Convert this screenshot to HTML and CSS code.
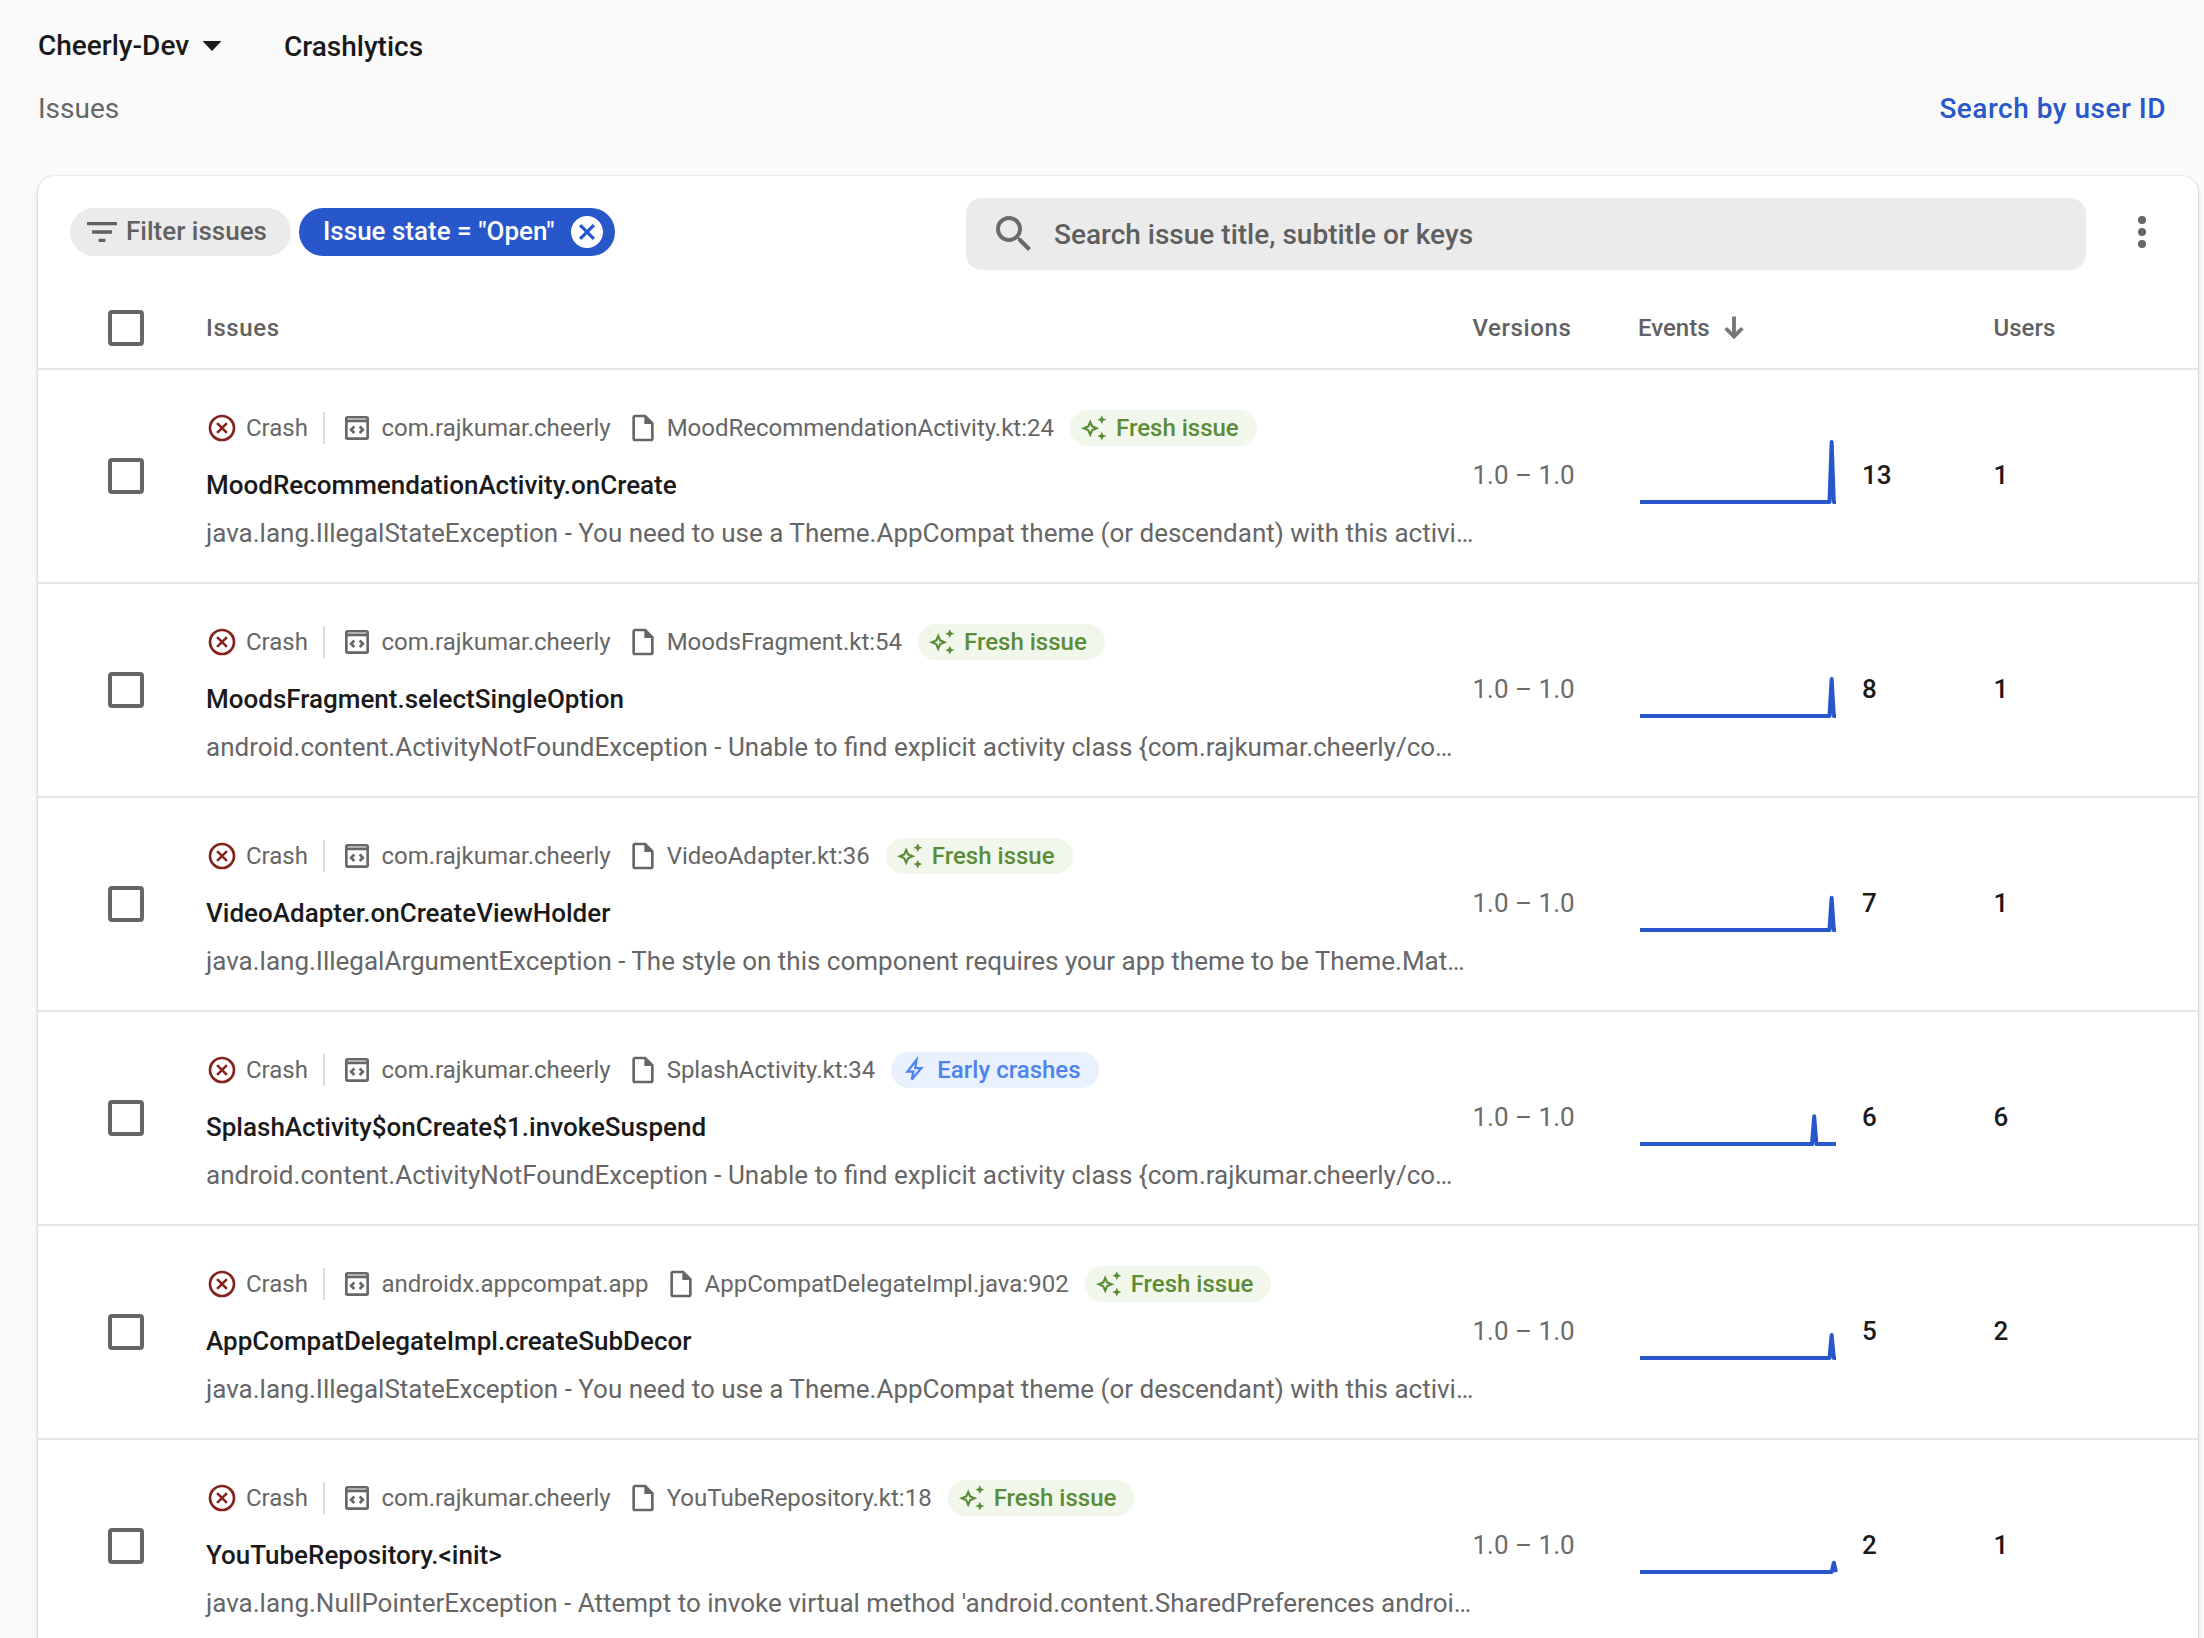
FILE: index.html
```html
<!DOCTYPE html>
<html lang="en">
<head>
<meta charset="utf-8">
<title>Crashlytics – Issues</title>
<link rel="stylesheet" href="styles.css">
</head>
<body>
<svg class="defs" aria-hidden="true">
  <symbol id="i-crash" viewBox="0 0 24 24"><path d="M12 2a10 10 0 1 0 0 20 10 10 0 0 0 0-20zm0 18a8 8 0 1 1 0-16 8 8 0 0 1 0 16z"/><path class="cross" d="M8.300 8.300 15.700 15.700M15.700 8.300 8.300 15.700"/></symbol>
  <symbol id="i-package" viewBox="0 0 24 24"><path fill-rule="evenodd" d="M5 3h14a2 2 0 0 1 2 2v14a2 2 0 0 1-2 2H5a2 2 0 0 1-2-2V5a2 2 0 0 1 2-2zm0 1.900v.8h14v-.8zM5 7.700V19h14V7.700z"/><path class="line" d="M10 10.900 7.600 13.300 10 15.700M14 10.900l2.400 2.400-2.400 2.400"/></symbol>
  <symbol id="i-file" viewBox="0 0 24 24"><path d="M14 2H6c-1.100 0-1.990.900-1.990 2L4 20c0 1.100.890 2 1.990 2H18c1.100 0 2-.900 2-2V8zM6 20V4h7v5h5v11z"/></symbol>
  <symbol id="i-fresh" viewBox="0 0 28 28"><path fill-rule="evenodd" d="M10.200 5.200 12.900 11.600 19.300 14.300 12.900 17 10.200 23.400 7.500 17 1.100 14.300 7.500 11.600zM10.200 10.700 9.100 13.200 6.600 14.300 9.100 15.400 10.200 17.900 11.300 15.400 13.800 14.300 11.300 13.200zM21.800 1.300l1.350 3.050 3.050 1.350-3.050 1.350-1.350 3.050-1.350-3.050-3.050-1.350 3.050-1.350zM21.800 17.700l1.350 3.050 3.050 1.350-3.050 1.350-1.350 3.050-1.350-3.050-3.050-1.350 3.050-1.350z"/></symbol>
  <symbol id="i-early" viewBox="0 0 28 28"><path class="bolt" d="M15.500 4 6.500 15.600h5.900l-1.600 8L20.300 12.200h-6z"/></symbol>
</svg>

<header class="topbar">
  <button class="project">Cheerly-Dev<svg class="caret" viewBox="0 0 20 10"><path d="M0.500 0h19L10 10z"/></svg></button>
  <span class="product">Crashlytics</span>
</header>
<div class="subbar">
  <span class="crumb">Issues</span>
  <a class="user-search">Search by user ID</a>
</div>

<main class="card">
  <div class="toolbar">
    <button class="chip chip-filter"><svg viewBox="0 0 24 24"><path d="M10 18h4v-2h-4zM3 6v2h18V6zm3 7h12v-2H6z"/></svg><span>Filter issues</span></button>
    <button class="chip chip-state"><span>Issue state = "Open"</span><svg viewBox="2 2 20 20"><path d="M12 2C6.470 2 2 6.470 2 12s4.470 10 10 10 10-4.470 10-10S17.530 2 12 2zm5 13.590L15.590 17 12 13.410 8.410 17 7 15.590 10.590 12 7 8.410 8.410 7 12 10.590 15.590 7 17 8.410 13.410 12z"/></svg></button>
    <div class="search"><svg viewBox="0 0 24 24"><path d="M15.500 14h-.790l-.280-.270A6.471 6.471 0 0 0 16 9.500 6.500 6.500 0 1 0 9.500 16c1.610 0 3.090-.590 4.230-1.570l.270.280v.790l5 4.990L20.490 19zm-6 0C7.010 14 5 11.990 5 9.500S7.010 5 9.500 5 14 7.010 14 9.500 11.990 14 9.500 14z"/></svg><span>Search issue title, subtitle or keys</span></div>
    <svg class="more" viewBox="0 0 24 24"><circle cx="12" cy="6" r="2"/><circle cx="12" cy="12" r="2"/><circle cx="12" cy="18" r="2"/></svg>
  </div>

  <div class="grid head">
    <span class="check"></span>
    <span class="spaced">Issues</span>
    <span class="spaced">Versions</span>
    <span class="sort">Events<svg viewBox="0 0 20 24"><path d="M8.100 0.500h3.800v15.600l5.100-5.200 2.600 2.600L10 23.200 0.400 13.500l2.600-2.600 5.100 5.200z"/></svg></span>
    <span>Users</span>
  </div>

  <div class="grid row">
    <span class="check"></span>
    <div class="info">
      <div class="meta"><svg class="crash"><use href="#i-crash"/></svg><span>Crash</span><i></i><svg><use href="#i-package"/></svg><span class="pkg">com.rajkumar.cheerly</span><svg><use href="#i-file"/></svg><span>MoodRecommendationActivity.kt:24</span><b class="tag fresh"><svg><use href="#i-fresh"/></svg>Fresh issue</b></div>
      <div class="title">MoodRecommendationActivity.onCreate</div>
      <div class="desc">java.lang.IllegalStateException - You need to use a Theme.AppCompat theme (or descendant) with this activi…</div>
    </div>
    <span class="versions">1.0 – 1.0</span>
    <div class="events"><svg viewBox="0 0 196 64"><polyline points="0,62 189.460,62 191.640,2 193.820,62 196,62"/></svg><span class="num">13</span></div>
    <span class="num">1</span>
  </div>

  <div class="grid row">
    <span class="check"></span>
    <div class="info">
      <div class="meta"><svg class="crash"><use href="#i-crash"/></svg><span>Crash</span><i></i><svg><use href="#i-package"/></svg><span class="pkg">com.rajkumar.cheerly</span><svg><use href="#i-file"/></svg><span>MoodsFragment.kt:54</span><b class="tag fresh"><svg><use href="#i-fresh"/></svg>Fresh issue</b></div>
      <div class="title">MoodsFragment.selectSingleOption</div>
      <div class="desc">android.content.ActivityNotFoundException - Unable to find explicit activity class {com.rajkumar.cheerly/co…</div>
    </div>
    <span class="versions">1.0 – 1.0</span>
    <div class="events"><svg viewBox="0 0 196 64"><polyline points="0,62 189.460,62 191.640,25.100 193.820,62 196,62"/></svg><span class="num">8</span></div>
    <span class="num">1</span>
  </div>

  <div class="grid row">
    <span class="check"></span>
    <div class="info">
      <div class="meta"><svg class="crash"><use href="#i-crash"/></svg><span>Crash</span><i></i><svg><use href="#i-package"/></svg><span class="pkg">com.rajkumar.cheerly</span><svg><use href="#i-file"/></svg><span>VideoAdapter.kt:36</span><b class="tag fresh"><svg><use href="#i-fresh"/></svg>Fresh issue</b></div>
      <div class="title">VideoAdapter.onCreateViewHolder</div>
      <div class="desc">java.lang.IllegalArgumentException - The style on this component requires your app theme to be Theme.Mat…</div>
    </div>
    <span class="versions">1.0 – 1.0</span>
    <div class="events"><svg viewBox="0 0 196 64"><polyline points="0,62 189.460,62 191.640,29.700 193.820,62 196,62"/></svg><span class="num">7</span></div>
    <span class="num">1</span>
  </div>

  <div class="grid row">
    <span class="check"></span>
    <div class="info">
      <div class="meta"><svg class="crash"><use href="#i-crash"/></svg><span>Crash</span><i></i><svg><use href="#i-package"/></svg><span class="pkg">com.rajkumar.cheerly</span><svg><use href="#i-file"/></svg><span>SplashActivity.kt:34</span><b class="tag early"><svg><use href="#i-early"/></svg>Early crashes</b></div>
      <div class="title">SplashActivity$onCreate$1.invokeSuspend</div>
      <div class="desc">android.content.ActivityNotFoundException - Unable to find explicit activity class {com.rajkumar.cheerly/co…</div>
    </div>
    <span class="versions">1.0 – 1.0</span>
    <div class="events"><svg viewBox="0 0 196 64"><polyline points="0,62 172,62 174.200,34.300 176.400,62 196,62"/></svg><span class="num">6</span></div>
    <span class="num">6</span>
  </div>

  <div class="grid row">
    <span class="check"></span>
    <div class="info">
      <div class="meta"><svg class="crash"><use href="#i-crash"/></svg><span>Crash</span><i></i><svg><use href="#i-package"/></svg><span class="pkg">androidx.appcompat.app</span><svg><use href="#i-file"/></svg><span>AppCompatDelegateImpl.java:902</span><b class="tag fresh"><svg><use href="#i-fresh"/></svg>Fresh issue</b></div>
      <div class="title">AppCompatDelegateImpl.createSubDecor</div>
      <div class="desc">java.lang.IllegalStateException - You need to use a Theme.AppCompat theme (or descendant) with this activi…</div>
    </div>
    <span class="versions">1.0 – 1.0</span>
    <div class="events"><svg viewBox="0 0 196 64"><polyline points="0,62 189.460,62 191.640,38.900 193.820,62 196,62"/></svg><span class="num">5</span></div>
    <span class="num">2</span>
  </div>

  <div class="grid row">
    <span class="check"></span>
    <div class="info">
      <div class="meta"><svg class="crash"><use href="#i-crash"/></svg><span>Crash</span><i></i><svg><use href="#i-package"/></svg><span class="pkg">com.rajkumar.cheerly</span><svg><use href="#i-file"/></svg><span>YouTubeRepository.kt:18</span><b class="tag fresh"><svg><use href="#i-fresh"/></svg>Fresh issue</b></div>
      <div class="title">YouTubeRepository.&lt;init&gt;</div>
      <div class="desc">java.lang.NullPointerException - Attempt to invoke virtual method 'android.content.SharedPreferences androi…</div>
    </div>
    <span class="versions">1.0 – 1.0</span>
    <div class="events"><svg viewBox="0 0 196 64"><polyline points="0,62 191.640,62 193.820,52.800 196,62"/></svg><span class="num">2</span></div>
    <span class="num">1</span>
  </div>
</main>
</body>
</html>
```
FILE: styles.css
```css
* { box-sizing: border-box; }

body {
  margin: 0;
  height: 1638px;
  padding: 29px 6px 0 38px;
  overflow: hidden;
  background: #fafafa;
  color: #1a1a1a;
  font: 400 26px/34px Roboto, sans-serif;
}

button {
  margin: 0;
  padding: 0;
  border: 0;
  background: none;
  color: inherit;
  font: inherit;
}

svg { display: block; flex: none; fill: currentColor; }
.defs { display: none; }

/* Page header */
.topbar {
  display: flex;
  height: 34px;
  font-size: 28px;
  line-height: 33px;
  font-weight: 500;
}
.project {
  display: flex;
  align-items: flex-start;
  width: 246px;
}
.caret { width: 20px; height: 10px; margin: 12px 0 0 13px; }
.product { padding-top: 1px; }

.subbar {
  display: flex;
  justify-content: space-between;
  margin: 29px 32px 51px 0;
  font-size: 28px;
  line-height: 33px;
  color: #666;
}
.user-search { color: #2757cb; font-weight: 500; letter-spacing: .5px; }

/* Issues card */
.card {
  padding-top: 22px;
  border-radius: 16px;
  background: #fff;
  box-shadow: 0 2px 4px rgba(0, 0, 0, .2), 0 0 2px rgba(0, 0, 0, .14);
}

.toolbar {
  display: flex;
  align-items: flex-start;
  height: 90px;
  padding-left: 32px;
  font-weight: 500;
}
.chip {
  display: flex;
  align-items: center;
  height: 48px;
  margin: 10px 8px 0 0;
  border-radius: 24px;
  white-space: nowrap;
}
.chip span { padding-bottom: 2px; }
.chip-filter { width: 221px; padding-left: 12px; gap: 4px; background: #ebebeb; color: #616161; }
.chip-filter svg { width: 40px; height: 40px; }
.chip-state { width: 316px; padding: 0 12px 0 24px; justify-content: space-between; background: #2757cb; color: #fff; }
.chip-state svg { width: 32px; height: 32px; }

.search {
  display: flex;
  align-items: center;
  gap: 16px;
  width: 1120px;
  height: 72px;
  margin-left: 343px;
  padding-left: 24px;
  border-radius: 16px;
  background: #ebebeb;
  color: #5f5f5f;
  font-size: 28px;
}
.search span { padding-top: 2px; }
.search svg { width: 48px; height: 48px; color: #6a6a6a; }
.more { width: 48px; height: 48px; margin: 10px 0 0 32px; color: #666; }

/* Table */
.grid {
  display: grid;
  grid-template-columns: 98px 1266.5px 165.5px 355.5px 1fr;
  align-items: center;
  padding-left: 70px;
  border-bottom: 2px solid #e7e7ea;
}
.head { height: 82px; color: #616161; font-size: 24px; font-weight: 500; }
.spaced { letter-spacing: .6px; }
.sort { display: flex; align-items: center; gap: 14px; }
.sort svg { width: 20px; height: 24px; color: #757575; }

.row { height: 214px; }
.check { width: 36px; height: 36px; border: 4px solid #666; border-radius: 4px; }

.info { align-self: start; padding-top: 40px; white-space: nowrap; }
.meta {
  display: flex;
  align-items: center;
  gap: 8px;
  height: 36px;
  color: #666;
  font-size: 24px;
}
.meta svg { width: 32px; height: 32px; }
.meta .crash { color: #85221b; }
.meta i { width: 2px; height: 32px; margin: 0 8px 0 7.5px; background: #dcdcdc; }
.pkg { margin-right: 8px; }
.line { fill: none; stroke: currentColor; stroke-width: 2; }
.cross { fill: none; stroke: currentColor; stroke-width: 1.9; }
.bolt { fill: none; stroke: currentColor; stroke-width: 2.3; }

.tag {
  display: flex;
  align-items: center;
  gap: 8px;
  height: 36px;
  margin-left: 8px;
  padding: 0 18px 0 10px;
  border-radius: 18px;
  font-weight: 500;
}
.meta .tag svg { width: 28px; height: 28px; }
.fresh { background: #f1f7ea; color: #5b8c38; }
.early { background: #e9f0fe; color: #4d82f0; }

.title { margin-top: 22px; font-weight: 500; }
.desc { margin-top: 14px; color: #666; }

.versions { margin-bottom: 2px; color: #6b6b6b; }
.num { margin-bottom: 2px; font-weight: 500; }
.events { display: flex; align-items: center; gap: 26px; padding-left: 2px; }
.events svg { width: 196px; height: 64px; margin-bottom: 8px; overflow: visible; }
.events polyline { fill: none; stroke: #2757cb; stroke-width: 4; stroke-linejoin: round; }
```
